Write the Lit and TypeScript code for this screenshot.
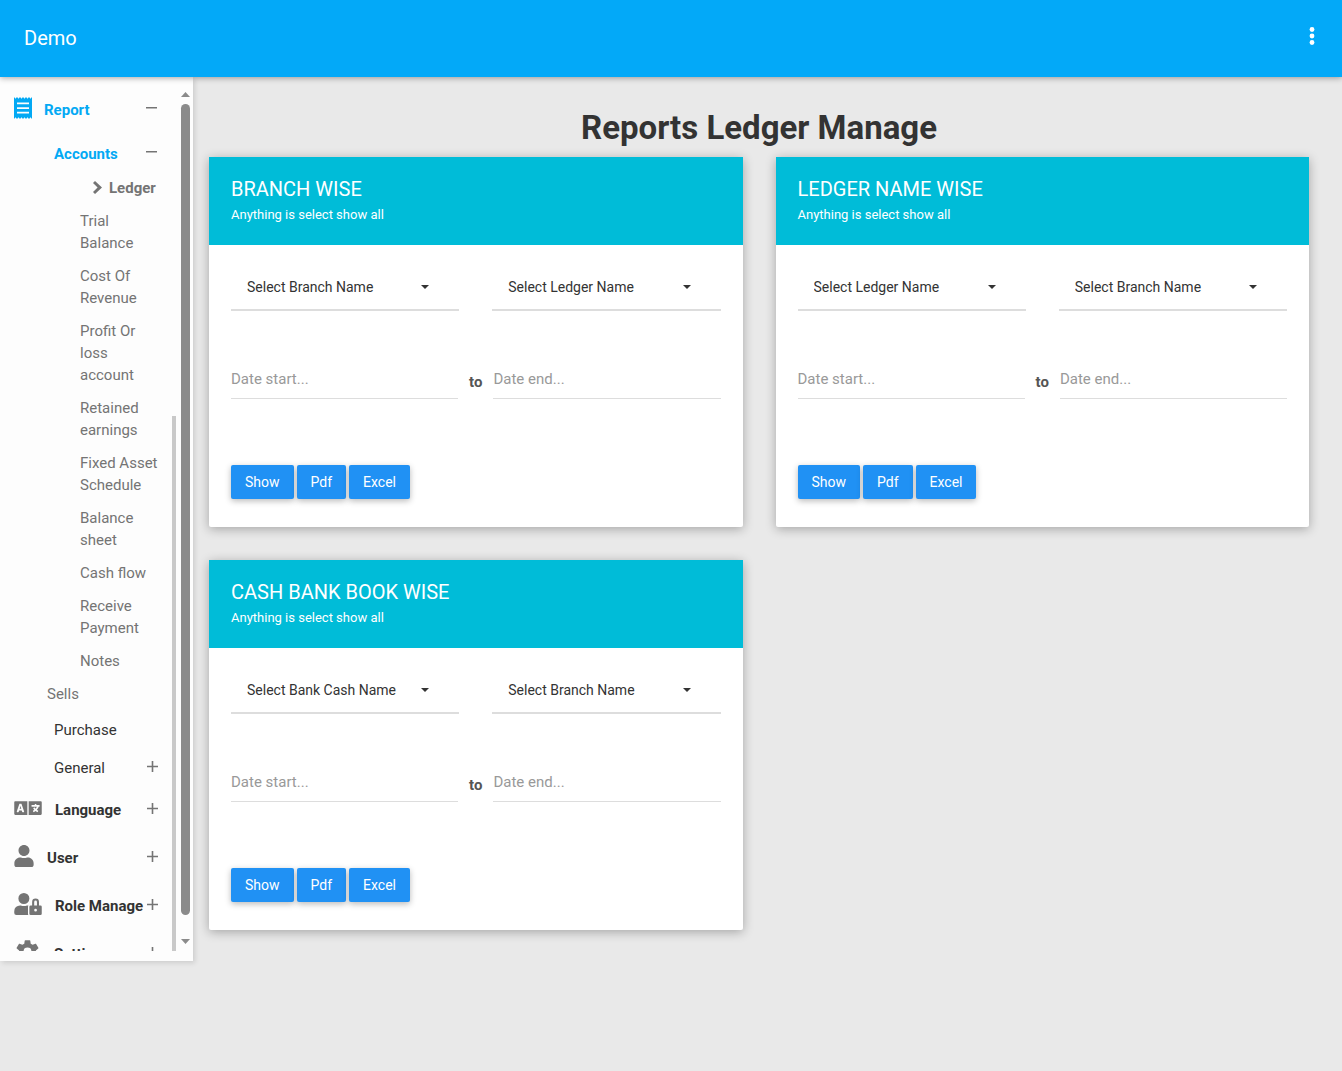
import { LitElement, html, svg, css, nothing } from "lit";
import { customElement, property } from "lit/decorators.js";
import { classMap } from "lit/directives/class-map.js";

const icons = {
  receipt: svg`<svg class="ico" width="18" height="22" viewBox="3 2 18 20" preserveAspectRatio="none"><path d="M18 17H6v-1.500h12zm0-4.200H6v-1.500h12zm0-4.200H6V7.100h12zM3 22l1.500-1.500L6 22l1.500-1.500L9 22l1.500-1.500L12 22l1.500-1.500L15 22l1.500-1.500L18 22l1.500-1.500L21 22V2l-1.500 1.500L18 2l-1.500 1.500L15 2l-1.500 1.500L12 2l-1.500 1.500L9 2 7.500 3.500 6 2 4.500 3.500 3 2v20z"/></svg>`,
  language: svg`<svg class="ico" width="28" height="22" viewBox="0 0 640 512"><path d="M152.100 236.200c-3.500-12.100-7.800-33.200-7.800-33.200h-.500s-4.300 21.100-7.800 33.200l-11.100 37.500H163zM616 96H336v320h280c13.300 0 24-10.700 24-24V120c0-13.300-10.700-24-24-24zm-24 120c0 6.600-5.400 12-12 12h-11.400c-6.900 23.600-21.700 47.400-42.700 69.900 8.400 6.400 17.100 12.500 26.100 18 5.500 3.400 7.300 10.500 4.100 16.200l-7.900 13.900c-3.400 5.900-10.900 7.800-16.700 4.300-12.600-7.800-24.500-16.100-35.400-24.900-10.900 8.700-22.700 17.100-35.400 24.900-5.800 3.500-13.300 1.600-16.700-4.300l-7.900-13.900c-3.200-5.600-1.400-12.800 4.200-16.200 9.300-5.700 18-11.700 26.100-18-7.900-8.400-14.900-17-21-25.700-4-5.700-2.200-13.600 3.700-17.100l6.500-3.900 7.300-4.300c5.400-3.200 12.400-1.700 16 3.400 5 7 10.800 14 17.400 20.900 13.500-14.200 23.800-28.900 30-43.200H412c-6.600 0-12-5.400-12-12v-16c0-6.600 5.400-12 12-12h64v-16c0-6.600 5.400-12 12-12h16c6.600 0 12 5.400 12 12v16h64c6.600 0 12 5.400 12 12zM0 120v272c0 13.300 10.700 24 24 24h280V96H24c-13.300 0-24 10.700-24 24zm58.900 216.100L116.400 167c1.700-4.900 6.200-8.100 11.400-8.100h32.500c5.100 0 9.700 3.300 11.400 8.100l57.500 169.100c2.600 7.800-3.100 15.900-11.400 15.900h-22.900a12 12 0 0 1-11.500-8.600l-9.400-31.900h-60.200l-9.100 31.800c-1.500 5.100-6.200 8.700-11.500 8.700H70.300c-8.200 0-14-8.100-11.400-15.900z"/></svg>`,
  user: svg`<svg class="ico" width="20" height="22" viewBox="0 0 448 512"><path d="M224 256c70.700 0 128-57.300 128-128S294.700 0 224 0 96 57.300 96 128s57.300 128 128 128zm89.600 32h-16.700c-22.200 10.200-46.900 16-72.900 16s-50.600-5.800-72.900-16h-16.700C60.200 288 0 348.200 0 422.400V464c0 26.500 21.500 48 48 48h352c26.500 0 48-21.500 48-48v-41.600c0-74.200-60.200-134.400-134.400-134.400z"/></svg>`,
  userLock: svg`<svg class="ico" width="28" height="22" viewBox="0 0 640 512"><path d="M224 256A128 128 0 1 0 96 128a128 128 0 0 0 128 128zm96 64a63.080 63.080 0 0 1 8.100-30.500c-4.800-.500-9.500-1.500-14.500-1.500h-16.700a174.080 174.080 0 0 1-145.800 0h-16.700A134.430 134.430 0 0 0 0 422.400V464a48 48 0 0 0 48 48h280.900a63.540 63.540 0 0 1-8.900-32zm288-32h-32v-80a80 80 0 0 0-160 0v80h-32a32 32 0 0 0-32 32v160a32 32 0 0 0 32 32h224a32 32 0 0 0 32-32V320a32 32 0 0 0-32-32zM496 432a32 32 0 1 1 32-32 32 32 0 0 1-32 32zm32-144h-64v-80a32 32 0 0 1 64 0z"/></svg>`,
  cog: svg`<svg class="ico" width="27" height="27" viewBox="0 0 24 24"><path d="M19.430 12.980c.040-.320.070-.640.070-.980s-.030-.660-.070-.980l2.110-1.650c.190-.150.240-.420.120-.640l-2-3.460c-.120-.220-.390-.300-.610-.220l-2.490 1c-.520-.400-1.080-.730-1.690-.980l-.380-2.650C14.460 2.180 14.250 2 14 2h-4c-.250 0-.460.180-.490.420l-.380 2.650c-.610.250-1.170.590-1.690.980l-2.490-1c-.230-.090-.490 0-.610.220l-2 3.460c-.130.220-.070.490.120.640l2.110 1.650c-.040.320-.070.650-.070.980s.030.660.070.980l-2.110 1.650c-.190.150-.240.420-.120.640l2 3.460c.120.220.390.300.610.220l2.490-1c.520.400 1.080.730 1.690.980l.380 2.650c.030.240.240.420.490.420h4c.250 0 .460-.180.490-.420l.380-2.650c.610-.250 1.170-.590 1.690-.980l2.490 1c.230.090.490 0 .610-.220l2-3.460c.120-.220.070-.490-.120-.640zM12 15.500a3.500 3.500 0 1 1 0-7 3.500 3.500 0 0 1 0 7z"/></svg>`,
  chevron: svg`<svg class="ico" width="9" height="13" viewBox="0 0 9 13"><path d="M0 2l2-2 7 6.500L2 13l-2-2 4.600-4.500z"/></svg>`,
  plus: svg`<svg class="sign" width="11" height="11" viewBox="0 0 11 11"><path d="M4.700 0h1.600v4.700H11v1.600H6.300V11H4.700V6.300H0V4.700h4.700z"/></svg>`,
  minus: svg`<svg class="sign minus" width="11" height="11" viewBox="0 0 11 11"><path d="M0 4h11v1.500H0z"/></svg>`,
};

const ledgerLinks = [
  "Trial Balance",
  "Cost Of Revenue",
  "Profit Or loss account",
  "Retained earnings",
  "Fixed Asset Schedule",
  "Balance sheet",
  "Cash flow",
  "Receive Payment",
  "Notes",
];

const cards = [
  { title: "BRANCH WISE", selects: ["Select Branch Name", "Select Ledger Name"] },
  { title: "LEDGER NAME WISE", selects: ["Select Ledger Name", "Select Branch Name"] },
  { title: "CASH BANK BOOK WISE", selects: ["Select Bank Cash Name", "Select Branch Name"] },
];

@customElement("report-card")
class ReportCard extends LitElement {
  @property() heading = "";
  @property({ attribute: false }) selects: string[] = [];

  static styles = css`
    :host {
      display: block;
      background: #fff;
      border-radius: 2px;
      box-shadow: 0 2px 11px rgba(0, 0, 0, 0.3);
    }
    .header {
      background: #00bcd8;
      color: #fff;
      padding: 20px 22px 19px;
    }
    h2 {
      margin: 0;
      font-size: 20px;
      line-height: 24px;
      font-weight: 400;
    }
    .header p {
      margin: 0;
      padding-top: 3px;
      font-size: 13px;
      line-height: 22px;
    }
    .body {
      padding: 22px 22px 28px;
    }
    .selects {
      display: grid;
      grid-template-columns: 1fr 1fr;
      column-gap: 33px;
    }
    .pick {
      display: grid;
      align-items: center;
      padding-bottom: 2px;
      border-bottom: 2px solid #ddd;
    }
    .pick select,
    .pick svg {
      grid-area: 1 / 1;
    }
    .pick svg {
      justify-self: end;
      margin-right: 30px;
      pointer-events: none;
      fill: #333;
    }
    select {
      appearance: none;
      width: 100%;
      height: 40px;
      padding: 0 48px 0 16px;
      border: 0;
      background: transparent;
      color: #333;
      font: 400 14px/20px Roboto, "Liberation Sans", sans-serif;
    }
    .dates {
      display: flex;
      align-items: center;
      margin-top: 49px;
    }
    input {
      flex: 1;
      min-width: 0;
      box-sizing: border-box;
      height: 39px;
      padding: 0;
      border: 0;
      border-bottom: 1px solid #ddd;
      background: transparent;
      color: #555;
      font: 400 15px/22px Roboto, "Liberation Sans", sans-serif;
    }
    input::placeholder {
      color: #999;
      opacity: 1;
    }
    .to {
      padding: 5px 11px 0;
      color: #555;
      font-size: 15px;
      line-height: 20px;
      font-weight: 700;
    }
    .actions {
      display: flex;
      gap: 3px;
      margin-top: 66px;
    }
    button {
      height: 34px;
      padding: 0 14px;
      border: 0;
      border-radius: 2px;
      background: #2091f4;
      color: #fff;
      font: 400 14px/20px Roboto, "Liberation Sans", sans-serif;
      box-shadow: 0 2px 6px rgba(0, 0, 0, 0.28);
    }
  `;

  render() {
    return html`
      <div class="header">
        <h2>${this.heading}</h2>
        <p>Anything is select show all</p>
      </div>
      <form class="body" @submit=${(e: Event) => e.preventDefault()}>
        <div class="selects">
          ${this.selects.map(
            (name) => html`
              <label class="pick">
                <select aria-label=${name}><option>${name}</option></select>
                <svg width="8" height="4" viewBox="0 0 8 4"><path d="M0 0h8L4 4z" /></svg>
              </label>
            `
          )}
        </div>
        <div class="dates">
          <input type="text" aria-label="Date start" placeholder="Date start..." />
          <span class="to">to</span>
          <input type="text" aria-label="Date end" placeholder="Date end..." />
        </div>
        <div class="actions">
          <button type="submit">Show</button>
          <button type="button">Pdf</button>
          <button type="button">Excel</button>
        </div>
      </form>
    `;
  }
}

@customElement("side-menu")
class SideMenu extends LitElement {
  static styles = css`
    :host {
      display: flex;
      box-sizing: border-box;
      background: #fdfdfd;
      box-shadow: 2px 2px 5px rgba(0, 0, 0, 0.12);
      padding-bottom: 10px;
    }
    nav {
      flex: 1;
      min-width: 0;
      overflow: hidden;
      padding-top: 9px;
      box-sizing: border-box;
    }
    ul {
      list-style: none;
      margin: 0;
      padding: 0;
    }
    .group {
      margin-bottom: -1px;
    }
    a {
      display: flex;
      align-items: center;
      box-sizing: border-box;
      color: #333;
      font-size: 15px;
      line-height: 22px;
      text-decoration: none;
      white-space: nowrap;
    }
    svg {
      flex: none;
      display: block;
      fill: #747474;
    }
    .sign {
      margin-left: auto;
      margin-bottom: 3px;
    }
    .minus {
      margin-right: 1px;
    }
    .top {
      height: 48px;
      padding: 0 14px;
      font-weight: 700;
    }
    .top .ico {
      margin: 0 13px 5px 0;
    }
    .tight .ico {
      margin-right: 12px;
    }
    .sub {
      height: 38px;
      padding: 0 14px 0 54px;
    }
    .active {
      color: #03a9f4;
    }
    .active .ico {
      fill: #03a9f4;
    }
    .sub.active {
      padding-top: 2px;
      font-weight: 700;
    }
    .leaf {
      padding: 5px 9px 6px 80px;
      color: #747474;
      white-space: normal;
    }
    .current {
      padding-left: 93px;
      gap: 7px;
      font-weight: 700;
    }
    .current .ico {
      margin-bottom: 2px;
    }
    .sells {
      padding-left: 47px;
    }
    .inner {
      width: 4px;
      display: flex;
      flex-direction: column;
    }
    .inner::before {
      content: "";
      flex: 339;
    }
    .inner::after {
      content: "";
      flex: 535;
      background: #c9c9c9;
    }
    .outer {
      width: 17px;
      box-sizing: border-box;
      padding: 15px 3px 7px 5px;
      display: flex;
      flex-direction: column;
      align-items: center;
    }
    .outer svg {
      fill: #8b8b8b;
    }
    .thumb {
      width: 9px;
      flex: 1;
      margin: 7px 0 24px;
      border-radius: 5px;
      background: #8b8b8b;
    }
  `;

  private top(label: string, icon: unknown, opts: { active?: boolean; tight?: boolean } = {}) {
    const classes = classMap({ top: true, active: !!opts.active, tight: !!opts.tight });
    return html`<a href="#" class=${classes}>${icon}<span>${label}</span>${opts.active ? icons.minus : icons.plus}</a>`;
  }

  private sub(label: string, sign: unknown = nothing, active = false) {
    return html`<a href="#" class=${classMap({ sub: true, active })}><span>${label}</span>${sign}</a>`;
  }

  render() {
    return html`
      <nav aria-label="Main">
        <ul>
          <li>
            ${this.top("Report", icons.receipt, { active: true, tight: true })}
            <ul class="group">
              <li>
                ${this.sub("Accounts", icons.minus, true)}
                <ul>
                  <li><a href="#" class="leaf current">${icons.chevron}<span>Ledger</span></a></li>
                  ${ledgerLinks.map((l) => html`<li><a href="#" class="leaf">${l}</a></li>`)}
                </ul>
              </li>
              <li><a href="#" class="leaf sells">Sells</a></li>
              <li>${this.sub("Purchase")}</li>
              <li>${this.sub("General", icons.plus)}</li>
            </ul>
          </li>
          <li>${this.top("Language", icons.language)}</li>
          <li>${this.top("User", icons.user)}</li>
          <li>${this.top("Role Manage", icons.userLock)}</li>
          <li>${this.top("Settings", icons.cog)}</li>
        </ul>
      </nav>
      <div class="inner"></div>
      <div class="outer">
        <svg width="9" height="5" viewBox="0 0 9 5"><path d="M4.500 0L9 5H0z" /></svg>
        <div class="thumb"></div>
        <svg width="9" height="5" viewBox="0 0 9 5"><path d="M0 0h9L4.500 5z" /></svg>
      </div>
    `;
  }
}

@customElement("app-root")
class AppRoot extends LitElement {
  static styles = css`
    :host {
      display: flex;
      flex-direction: column;
      min-height: 100vh;
      background: #e9e9e9;
      color: #333;
      font-family: Roboto, "Liberation Sans", sans-serif;
    }
    header {
      display: flex;
      align-items: center;
      justify-content: space-between;
      box-sizing: border-box;
      height: 77px;
      padding: 0 24px 2px;
      background: #03a9f8;
      box-shadow: 0 1px 6px rgba(0, 0, 0, 0.35);
      z-index: 1;
    }
    .brand {
      color: #fff;
      font-size: 20px;
      line-height: 28px;
      text-decoration: none;
    }
    .more {
      padding: 0 3px 3px;
      border: 0;
      background: none;
    }
    .more svg {
      display: block;
      fill: #fff;
    }
    .page {
      display: grid;
      grid-template-columns: 193px 1fr;
      align-items: start;
    }
    side-menu {
      height: calc(100vh - 187px);
    }
    main {
      padding: 29px 33px 33px 16px;
    }
    h1 {
      margin: 0 0 7px;
      font-size: 33px;
      line-height: 44px;
      font-weight: 700;
      text-align: center;
    }
    .cards {
      display: grid;
      grid-template-columns: 1fr 1fr;
      gap: 33px;
    }
  `;

  render() {
    return html`
      <header>
        <a class="brand" href="#">Demo</a>
        <button class="more" aria-label="More">
          <svg width="6" height="18" viewBox="0 0 6 18">
            <circle cx="3" cy="2.500" r="2.400" />
            <circle cx="3" cy="9" r="2.400" />
            <circle cx="3" cy="15.500" r="2.400" />
          </svg>
        </button>
      </header>
      <div class="page">
        <side-menu></side-menu>
        <main>
          <h1>Reports Ledger Manage</h1>
          <div class="cards">
            ${cards.map((c) => html`<report-card .heading=${c.title} .selects=${c.selects}></report-card>`)}
          </div>
        </main>
      </div>
    `;
  }
}
